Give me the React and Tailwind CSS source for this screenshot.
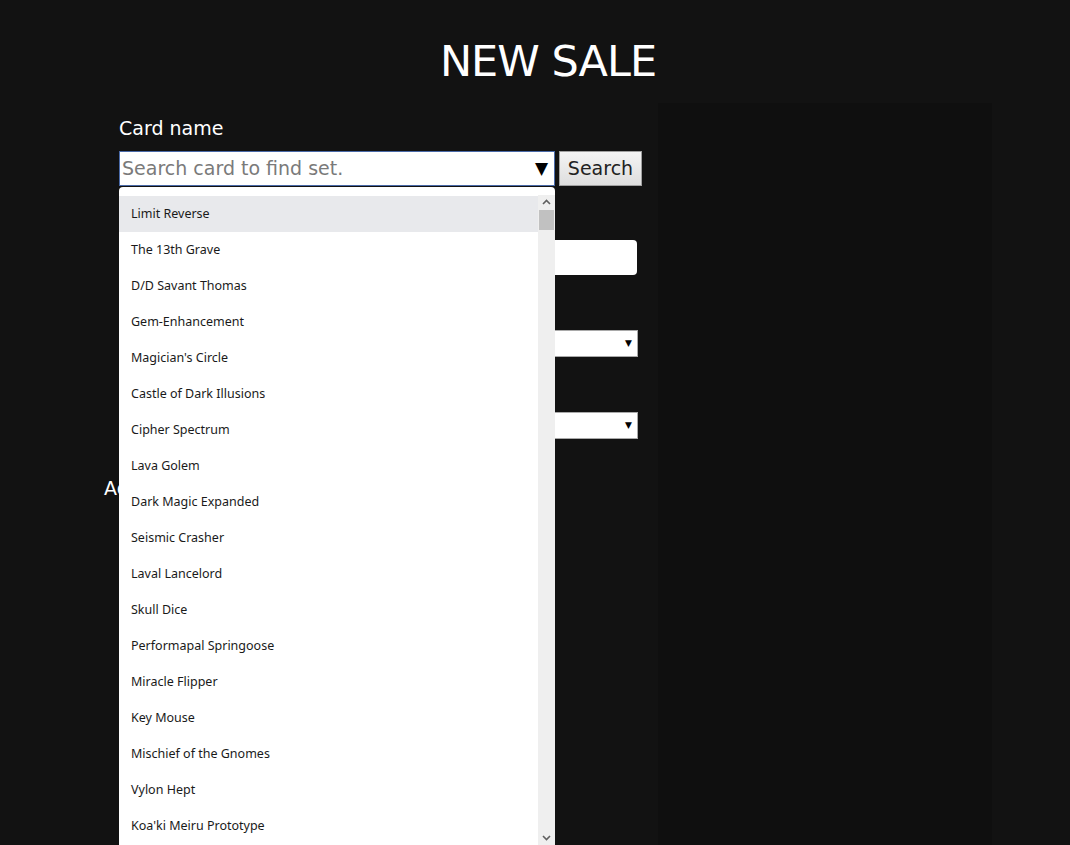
import React from 'react';

const cards = [
  'Limit Reverse',
  'The 13th Grave',
  'D/D Savant Thomas',
  'Gem-Enhancement',
  "Magician's Circle",
  'Castle of Dark Illusions',
  'Cipher Spectrum',
  'Lava Golem',
  'Dark Magic Expanded',
  'Seismic Crasher',
  'Laval Lancelord',
  'Skull Dice',
  'Performapal Springoose',
  'Miracle Flipper',
  'Key Mouse',
  'Mischief of the Gnomes',
  'Vylon Hept',
  "Koa'ki Meiru Prototype",
  "Gravekeeper's Spy",
];

const SelectBox = () => (
  <div className="flex items-center justify-end h-[27px] w-[519px] bg-white border border-[#a9a9a9] pr-[5px]">
    <span className="text-[9px] text-black leading-none">▼</span>
  </div>
);

const App = () => {
  return (
    <div className="w-full h-[845px] overflow-hidden bg-[#121212] font-['DejaVu_Sans',sans-serif]">
      <div className="ml-[104px] w-[888px]">
        <h1 className="pt-[40px] h-[103px] text-center text-white text-[43px] leading-none tracking-[-1px]">
          NEW SALE
        </h1>
        <div className="flex">
          <div className="relative w-[554px] pl-[15px]">
            <label className="block pt-[13px] text-white text-[19px] leading-[25px]">Card name</label>
            <div className="flex mt-[10px] gap-[4px]">
              <div className="flex items-center h-[35px] w-[436px] bg-white border border-[#4a6aa8] pl-[2px] pr-[6px]">
                <span className="flex-1 text-[19px] text-[#7a7a7a]">Search card to find set.</span>
                <span className="text-[17px] text-black leading-none">▼</span>
              </div>
              <button className="h-[35px] w-[83px] border border-[#a0a0a0] bg-gradient-to-b from-[#f4f4f4] to-[#dedede] text-[19px] text-[#222]">
                Search
              </button>
            </div>

            <label className="block mt-[29px] text-white text-[19px] leading-[25px]">Price</label>
            <div className="h-[35px] w-[518px] bg-white rounded-[4px]" />

            <label className="block mt-[30px] text-white text-[19px] leading-[25px]">Condition</label>
            <SelectBox />

            <label className="block mt-[30px] text-white text-[19px] leading-[25px]">Edition</label>
            <SelectBox />

            <div className="-ml-[15px] mt-[37px] text-white text-[19px] leading-[25px]">Add</div>

            <div className="absolute left-[15px] top-[84px] w-[436px] h-[658px] bg-white rounded-t-[4px] pt-[8px] flex overflow-hidden font-['Noto_Sans',sans-serif]">
              <ul className="flex-1 pt-[1px]">
                {cards.map((c, i) => (
                  <li
                    key={c}
                    className={`h-[36px] flex items-center pl-[12px] text-[12.5px] text-[#1a1a1a] ${i === 0 ? 'bg-[#e8e9ec]' : ''}`}
                  >
                    {c}
                  </li>
                ))}
              </ul>
              <div className="w-[17px] bg-[#efefef] flex flex-col items-center">
                <svg width="9" height="6" viewBox="0 0 9 6" className="mt-[4px]">
                  <path d="M1 5 L4.5 1.5 L8 5" stroke="#606060" strokeWidth="1.6" fill="none" />
                </svg>
                <div className="mt-[5px] w-[15px] h-[20px] bg-[#c1c1c1]" />
                <div className="flex-1" />
                <svg width="9" height="6" viewBox="0 0 9 6" className="mb-[4px]">
                  <path d="M1 1 L4.5 4.5 L8 1" stroke="#606060" strokeWidth="1.6" fill="none" />
                </svg>
              </div>
            </div>
          </div>
          <div className="w-[334px] h-[760px] bg-[#0f0f0f]" />
        </div>
      </div>
    </div>
  );
};

export default App;
